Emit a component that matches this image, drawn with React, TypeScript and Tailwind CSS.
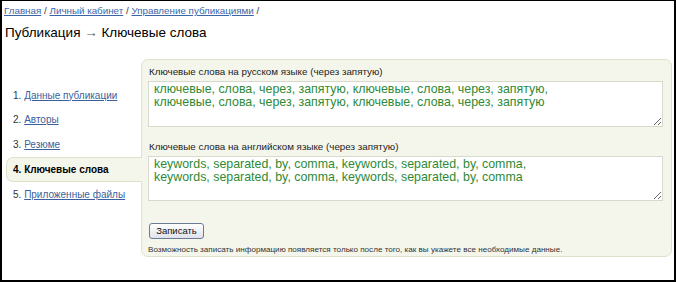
import React from "react";

const App = () => {
    const steps = [
        { n: "1.", label: "Данные публикации" },
        { n: "2.", label: "Авторы" },
        { n: "3.", label: "Резюме" },
        { n: "4.", label: "Ключевые слова", active: true },
        { n: "5.", label: "Приложенные файлы" },
    ];

    const ru = "ключевые, слова, через, запятую, ключевые, слова, через, запятую,\nключевые, слова, через, запятую, ключевые, слова, через, запятую";
    const en = "keywords, separated, by, comma, keywords, separated, by, comma,\nkeywords, separated, by, comma, keywords, separated, by, comma";

    return (
        <div className="w-[676px] h-[282px] bg-white border-black border-l-2 border-r-2 border-b-2 border-t font-['Liberation_Sans',Arial,sans-serif] text-[#222] overflow-hidden">
            {/* Breadcrumbs */}
            <div className="pl-[2px] pt-[3px] text-[9.8px] leading-[13px] text-[#333]">
                <a href="#" className="text-[#3a66a8] underline">Главная</a> /{" "}
                <a href="#" className="text-[#3a66a8] underline">Личный кабинет</a> /{" "}
                <a href="#" className="text-[#3a66a8] underline">Управление публикациями</a> /
            </div>

            <h1 className="pl-[3px] mt-[8px] text-[13.5px] leading-[16px] text-black">
                Публикация <span className="text-[#555]">→</span> Ключевые слова
            </h1>

            <div className="flex mt-[18px]">
                {/* Steps nav */}
                <ul className="w-[139px] pt-[24px] pl-[4px] text-[10px]">
                    {steps.map((s) =>
                        s.active ? (
                            <li
                                key={s.n}
                                className="relative z-10 -mr-[1px] h-[25px] flex items-center pl-[6px] bg-[#f4f6ec] border border-r-0 border-[#dde3cb] rounded-l-[7px] font-bold text-black"
                            >
                                {s.n} {s.label}
                            </li>
                        ) : (
                            <li key={s.n} className="h-[24.6px] flex items-center pl-[7px] text-[#333]">
                                {s.n}&nbsp;<a href="#" className="text-[#3a5f9c] underline">{s.label}</a>
                            </li>
                        )
                    )}
                </ul>

                {/* Form panel */}
                <div className="w-[531px] h-[198px] bg-[#f4f6ec] border border-[#dde3cb] rounded-[7px] pl-[6px] pr-[8px] pt-[5px]">
                    <div className="text-[9.8px] leading-[13px] pl-[1px] text-[#222]">Ключевые слова на русском языке (через запятую)</div>
                    <textarea
                        defaultValue={ru}
                        className="mt-[3px] block w-[515px] h-[46px] bg-white border border-[#d6d9cc] px-[5px] pt-[1px] text-[12.4px] leading-[12.5px] text-[#2e8a36] whitespace-pre overflow-hidden font-['Liberation_Sans',Arial,sans-serif]"
                    />

                    <div className="mt-[13px] text-[9.8px] leading-[13px] pl-[1px] text-[#222]">Ключевые слова на английском языке (через запятую)</div>
                    <textarea
                        defaultValue={en}
                        className="mt-[3px] block w-[515px] h-[45px] bg-white border border-[#d6d9cc] px-[5px] pt-[1px] text-[12.4px] leading-[12.5px] text-[#2e8a36] whitespace-pre overflow-hidden font-['Liberation_Sans',Arial,sans-serif]"
                    />

                    <button className="mt-[22px] ml-[1px] h-[16px] w-[55px] flex items-center justify-center text-[9.5px] font-normal text-[#111] border border-[#6b7a96] rounded-[3px] bg-gradient-to-b from-white to-[#dfe2ea]">
                        Записать
                    </button>
                    <div className="mt-[5px] text-[8.1px] leading-[12px] text-[#333]">
                        Возможность записать информацию появляется только после того, как вы укажете все необходимые данные.
                    </div>
                </div>
            </div>
        </div>
    );
};

export default App;
